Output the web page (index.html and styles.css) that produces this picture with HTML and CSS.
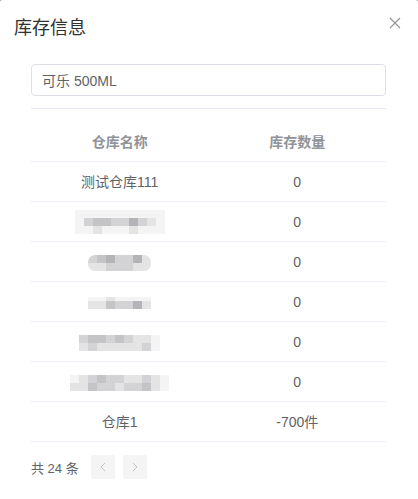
FILE: index.html
```html
<!DOCTYPE html>
<html lang="zh-CN">
<head>
    <meta charset="UTF-8">
    <meta name="viewport" content="width=device-width, initial-scale=1.0">
    <title>库存信息</title>
    <link rel="stylesheet" href="styles.css">
</head>
<body>
    <div class="dialog">
        <div class="dialog-header">
            <span class="dialog-title">库存信息</span>
            <button class="dialog-close" aria-label="关闭">
                <svg width="12" height="12" viewBox="0 0 12 12">
                    <path d="M1 1 L11 11 M11 1 L1 11" stroke="#909399" stroke-width="1.1" fill="none"/>
                </svg>
            </button>
        </div>
        <div class="dialog-body">
            <input class="goods-input" type="text" value="可乐 500ML" readonly>

            <table class="stock-table">
                <thead>
                    <tr>
                        <th>仓库名称</th>
                        <th>库存数量</th>
                    </tr>
                </thead>
                <tbody>
                    <tr>
                        <td>测试仓库111</td>
                        <td>0</td>
                    </tr>
                    <tr>
                        <td>
                            <!-- hidden warehouse names -->
                            <div class="mosaic">
                                <div class="mosaic-row"><i class="g0"></i><i class="g0"></i><i class="g0"></i><i class="g0"></i><i class="g0"></i><i class="g0"></i><i class="g0"></i><i class="g0"></i><i class="g0"></i><i class="g0"></i></div>
                                <div class="mosaic-row"><i class="g0"></i><i class="g2"></i><i class="g3"></i><i class="g3"></i><i class="g2"></i><i class="g2"></i><i class="g4"></i><i class="g2"></i><i class="g1"></i><i class="g0"></i></div>
                                <div class="mosaic-row"><i class="g0"></i><i class="g0"></i><i class="g1"></i><i class="g0"></i><i class="g0"></i><i class="g0"></i><i class="g1"></i><i class="g0"></i><i class="g0"></i><i class="g0"></i></div>
                            </div>
                        </td>
                        <td>0</td>
                    </tr>
                    <tr>
                        <td>
                            <div class="mosaic rounded">
                                <div class="mosaic-row"><i class="g2"></i><i class="g3"></i><i class="g4"></i><i class="g2"></i><i class="g2"></i><i class="g4"></i><i class="g1"></i></div>
                                <div class="mosaic-row"><i class="g1"></i><i class="g1"></i><i class="g2"></i><i class="g2"></i><i class="g2"></i><i class="g1"></i><i class="g1"></i></div>
                            </div>
                        </td>
                        <td>0</td>
                    </tr>
                    <tr>
                        <td>
                            <div class="mosaic">
                                <div class="mosaic-row thin"><i class="g0"></i><i class="g0"></i><i class="g1"></i><i class="g0"></i><i class="g0"></i><i class="g0"></i><i class="g0"></i></div>
                                <div class="mosaic-row"><i class="g1"></i><i class="g1"></i><i class="g3"></i><i class="g2"></i><i class="g2"></i><i class="g4"></i><i class="g1"></i></div>
                            </div>
                        </td>
                        <td>0</td>
                    </tr>
                    <tr>
                        <td>
                            <div class="mosaic">
                                <div class="mosaic-row"><i class="g2"></i><i class="g3"></i><i class="g3"></i><i class="g2"></i><i class="g3"></i><i class="g2"></i><i class="g1"></i><i class="g1"></i><i class="g0"></i></div>
                                <div class="mosaic-row"><i class="g1"></i><i class="g2"></i><i class="g1"></i><i class="g1"></i><i class="g1"></i><i class="g1"></i><i class="g1"></i><i class="g2"></i><i class="g0"></i></div>
                            </div>
                        </td>
                        <td>0</td>
                    </tr>
                    <tr>
                        <td>
                            <div class="mosaic">
                                <div class="mosaic-row"><i class="g0"></i><i class="g1"></i><i class="g2"></i><i class="g3"></i><i class="g2"></i><i class="g2"></i><i class="g1"></i><i class="g1"></i><i class="g2"></i><i class="g1"></i><i class="g0"></i></div>
                                <div class="mosaic-row"><i class="g1"></i><i class="g1"></i><i class="g3"></i><i class="g2"></i><i class="g2"></i><i class="g1"></i><i class="g2"></i><i class="g2"></i><i class="g3"></i><i class="g1"></i><i class="g0"></i></div>
                            </div>
                        </td>
                        <td>0</td>
                    </tr>
                    <tr>
                        <td>仓库1</td>
                        <td>-700件</td>
                    </tr>
                </tbody>
            </table>

            <div class="pagination">
                <span class="total">共 24 条</span>
                <button class="page-btn" disabled>
                    <svg width="8" height="10" viewBox="0 0 8 10"><path d="M6 1 L2 5 L6 9" stroke="#c0c4cc" stroke-width="1" fill="none"/></svg>
                </button>
                <button class="page-btn" disabled>
                    <svg width="8" height="10" viewBox="0 0 8 10"><path d="M2 1 L6 5 L2 9" stroke="#c0c4cc" stroke-width="1" fill="none"/></svg>
                </button>
            </div>
        </div>
    </div>
</body>
</html>
```

FILE: styles.css
```css
body {
    margin: 0;
    background: #8a8a8a;
    font-family: "Liberation Sans", "Noto Sans CJK SC", sans-serif;
    color: #606266;
}
.dialog {
    background: #fff;
    width: 418px;
    height: 499px;
    border-radius: 2px 2px 0 0;
    overflow: hidden;
}
.dialog-header {
    display: flex;
    justify-content: space-between;
    align-items: flex-start;
    padding: 16px 17px 0 14px;
}
.dialog-title {
    font-size: 18px;
    line-height: 24px;
    color: #303133;
}
.dialog-close {
    border: none;
    background: none;
    padding: 0;
    margin-top: 1px;
    width: 12px;
    height: 12px;
    cursor: pointer;
}
.dialog-body {
    padding: 24px 32px 0 31px;
}
.goods-input {
    display: block;
    box-sizing: border-box;
    width: 100%;
    height: 32px;
    padding: 0 10px;
    border: 1px solid #dcdfe6;
    border-radius: 4px;
    font-family: inherit;
    font-size: 14px;
    color: #606266;
    outline: none;
}
.stock-table {
    width: 100%;
    margin-top: 12px;
    border-collapse: collapse;
    table-layout: fixed;
    border-top: 1px solid #e4e7ed;
    font-size: 14px;
}
.stock-table th {
    padding: 24px 0 10px;
    line-height: 18px;
    color: #909399;
    font-weight: bold;
    border-bottom: 1px solid #ebeef5;
}
.stock-table td {
    height: 39px;
    padding: 0;
    text-align: center;
    line-height: 18px;
    border-bottom: 1px solid #ebeef5;
}
.mosaic {
    display: inline-block;
    vertical-align: middle;
    overflow: hidden;
    filter: blur(0.4px);
}
.mosaic.rounded {
    border-radius: 7px;
}
.mosaic-row {
    display: flex;
}
.mosaic-row i {
    width: 9px;
    height: 8px;
}
.mosaic-row.thin i {
    height: 4px;
}
.g0 { background: #f4f4f4; }
.g1 { background: #e4e4e5; }
.g2 { background: #d3d3d5; }
.g3 { background: #c4c4c7; }
.g4 { background: #b4b4b8; }
.pagination {
    display: flex;
    align-items: center;
    margin-top: 13px;
    font-size: 13px;
}
.total {
    margin-right: 12px;
    color: #606266;
}
.page-btn {
    width: 24px;
    height: 24px;
    margin-right: 8px;
    padding: 0;
    border: none;
    border-radius: 2px;
    background: #f4f4f5;
    display: flex;
    align-items: center;
    justify-content: center;
}
```
